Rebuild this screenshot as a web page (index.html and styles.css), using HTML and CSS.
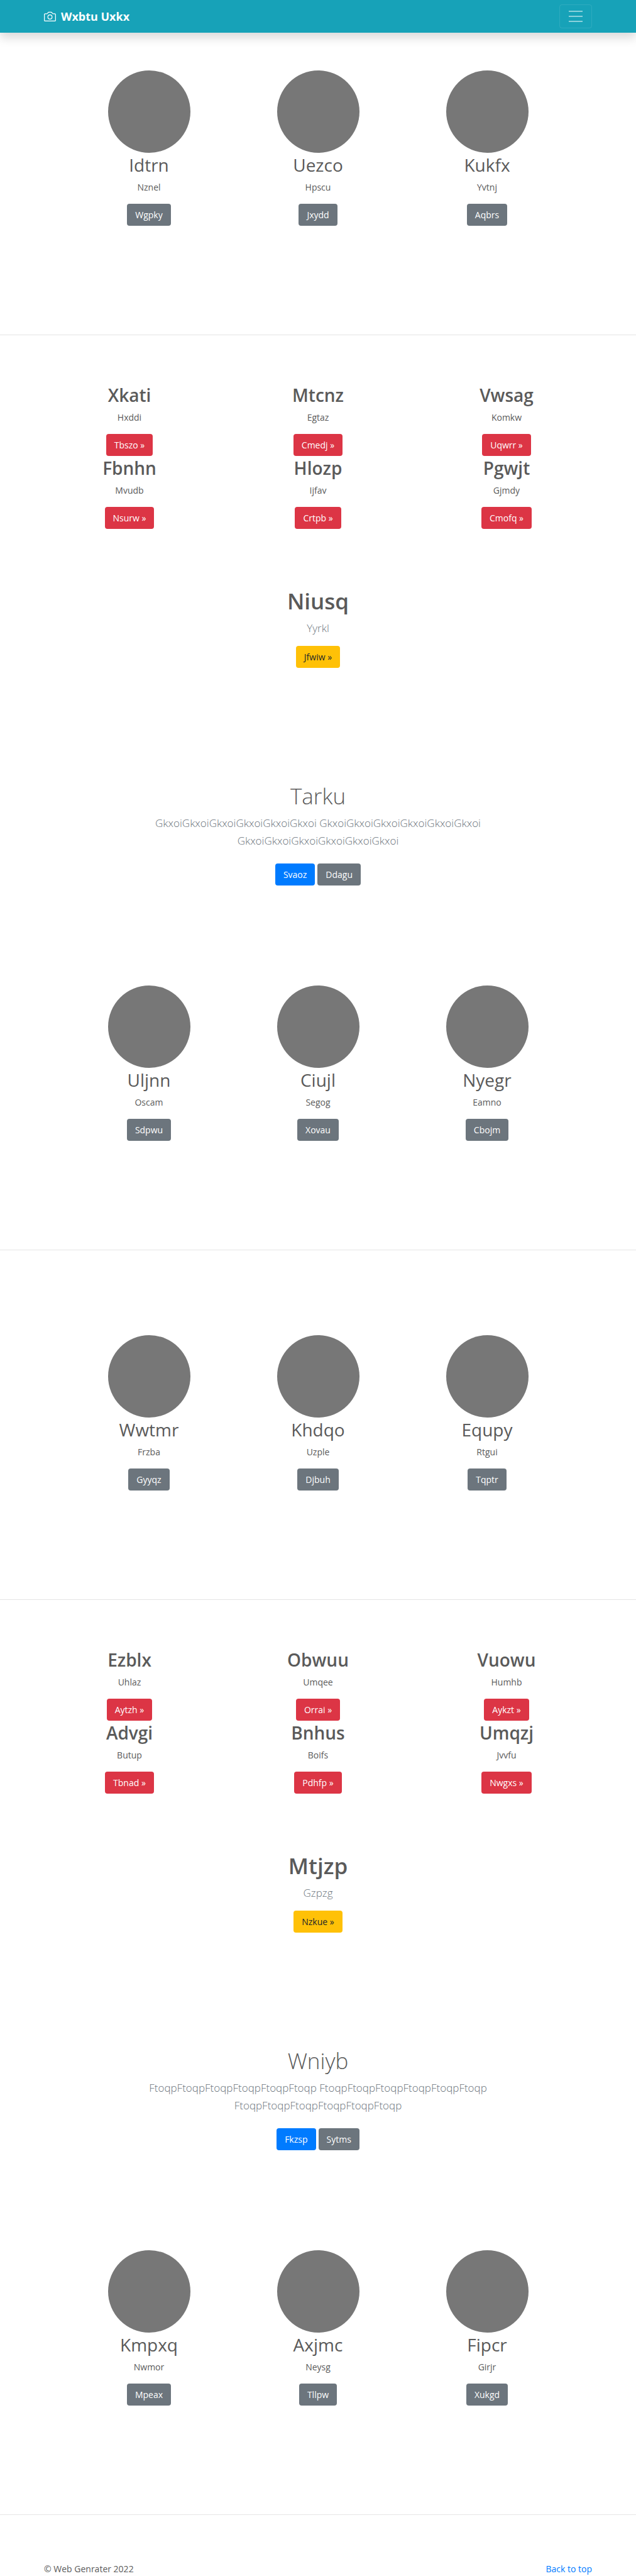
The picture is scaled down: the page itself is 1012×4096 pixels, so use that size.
FILE: index.html
```html
<!DOCTYPE html>
<html lang="en">
<head>
<meta charset="utf-8">
<meta name="viewport" content="width=device-width, initial-scale=1">
<title>Wxbtu Uxkx</title>
<link rel="stylesheet" href="styles.css">
</head>
<body>
<header class="navbar" id="top">
  <div class="container navbar-inner">
    <a class="brand" href="#top">
      <svg class="brand-icon" viewBox="0 0 20 20" fill="none" stroke="currentColor" stroke-width="1.3" aria-hidden="true">
        <path d="M2 5.200h2.400c.8 0 1.300-.4 1.700-1l.6-.9c.3-.5.8-.8 1.400-.8h3.800c.6 0 1.100.3 1.400.8l.6.9c.4.6.9 1 1.700 1H18a1.300 1.300 0 0 1 1.300 1.300v9.500a1.300 1.300 0 0 1-1.300 1.300H2A1.300 1.300 0 0 1 .7 16V6.500A1.300 1.300 0 0 1 2 5.200z"/>
        <circle cx="10" cy="10.500" r="3.500"/>
      </svg>
      <strong>Wxbtu Uxkx</strong>
    </a>
    <button class="toggler" type="button" aria-label="Toggle navigation">
      <svg class="toggler-icon" viewBox="0 0 28 28" stroke="currentColor" stroke-width="2" aria-hidden="true"><path d="M3 6h22M3 14h22M3 22h22"/></svg>
    </button>
  </div>
</header>
<main>
  <section class="features">
    <div class="card"><div class="avatar"></div><h2>Idtrn</h2><p>Nznel</p><a class="btn btn-secondary" href="#">Wgpky</a></div>
    <div class="card"><div class="avatar"></div><h2>Uezco</h2><p>Hpscu</p><a class="btn btn-secondary" href="#">Jxydd</a></div>
    <div class="card"><div class="avatar"></div><h2>Kukfx</h2><p>Yvtnj</p><a class="btn btn-secondary" href="#">Aqbrs</a></div>
  </section>
  <hr>
  <section class="topics">
    <div class="card"><h2>Xkati</h2><p>Hxddi</p><a class="btn btn-danger" href="#">Tbszo »</a></div>
    <div class="card"><h2>Mtcnz</h2><p>Egtaz</p><a class="btn btn-danger" href="#">Cmedj »</a></div>
    <div class="card"><h2>Vwsag</h2><p>Komkw</p><a class="btn btn-danger" href="#">Uqwrr »</a></div>
    <div class="card"><h2>Fbnhn</h2><p>Mvudb</p><a class="btn btn-danger" href="#">Nsurw »</a></div>
    <div class="card"><h2>Hlozp</h2><p>Ijfav</p><a class="btn btn-danger" href="#">Crtpb »</a></div>
    <div class="card"><h2>Pgwjt</h2><p>Gjmdy</p><a class="btn btn-danger" href="#">Cmofq »</a></div>
  </section>
  <section class="callout">
    <h1>Niusq</h1>
    <p class="lead">Yyrkl</p>
    <a class="btn btn-warning" href="#">Jfwiw »</a>
  </section>
  <section class="intro">
    <h1>Tarku</h1>
    <p class="lead">GkxoiGkxoiGkxoiGkxoiGkxoiGkxoi GkxoiGkxoiGkxoiGkxoiGkxoiGkxoi GkxoiGkxoiGkxoiGkxoiGkxoiGkxoi</p>
    <div class="actions"><a class="btn btn-primary" href="#">Svaoz</a><a class="btn btn-secondary" href="#">Ddagu</a></div>
  </section>
  <section class="features">
    <div class="card"><div class="avatar"></div><h2>Uljnn</h2><p>Oscam</p><a class="btn btn-secondary" href="#">Sdpwu</a></div>
    <div class="card"><div class="avatar"></div><h2>Ciujl</h2><p>Segog</p><a class="btn btn-secondary" href="#">Xovau</a></div>
    <div class="card"><div class="avatar"></div><h2>Nyegr</h2><p>Eamno</p><a class="btn btn-secondary" href="#">Cbojm</a></div>
  </section>
  <hr>
  <section class="features features-spaced">
    <div class="card"><div class="avatar"></div><h2>Wwtmr</h2><p>Frzba</p><a class="btn btn-secondary" href="#">Gyyqz</a></div>
    <div class="card"><div class="avatar"></div><h2>Khdqo</h2><p>Uzple</p><a class="btn btn-secondary" href="#">Djbuh</a></div>
    <div class="card"><div class="avatar"></div><h2>Equpy</h2><p>Rtgui</p><a class="btn btn-secondary" href="#">Tqptr</a></div>
  </section>
  <hr>
  <section class="topics">
    <div class="card"><h2>Ezblx</h2><p>Uhlaz</p><a class="btn btn-danger" href="#">Aytzh »</a></div>
    <div class="card"><h2>Obwuu</h2><p>Umqee</p><a class="btn btn-danger" href="#">Orrai »</a></div>
    <div class="card"><h2>Vuowu</h2><p>Humhb</p><a class="btn btn-danger" href="#">Aykzt »</a></div>
    <div class="card"><h2>Advgi</h2><p>Butup</p><a class="btn btn-danger" href="#">Tbnad »</a></div>
    <div class="card"><h2>Bnhus</h2><p>Boifs</p><a class="btn btn-danger" href="#">Pdhfp »</a></div>
    <div class="card"><h2>Umqzj</h2><p>Jvvfu</p><a class="btn btn-danger" href="#">Nwgxs »</a></div>
  </section>
  <section class="callout">
    <h1>Mtjzp</h1>
    <p class="lead">Gzpzg</p>
    <a class="btn btn-warning" href="#">Nzkue »</a>
  </section>
  <section class="intro">
    <h1>Wniyb</h1>
    <p class="lead">FtoqpFtoqpFtoqpFtoqpFtoqpFtoqp FtoqpFtoqpFtoqpFtoqpFtoqpFtoqp FtoqpFtoqpFtoqpFtoqpFtoqpFtoqp</p>
    <div class="actions"><a class="btn btn-primary" href="#">Fkzsp</a><a class="btn btn-secondary" href="#">Sytms</a></div>
  </section>
  <section class="features">
    <div class="card"><div class="avatar"></div><h2>Kmpxq</h2><p>Nwmor</p><a class="btn btn-secondary" href="#">Mpeax</a></div>
    <div class="card"><div class="avatar"></div><h2>Axjmc</h2><p>Neysg</p><a class="btn btn-secondary" href="#">Tllpw</a></div>
    <div class="card"><div class="avatar"></div><h2>Fipcr</h2><p>Girjr</p><a class="btn btn-secondary" href="#">Xukgd</a></div>
  </section>
  <hr>
</main>
<footer class="container footer">
  <p>© Web Genrater 2022</p>
  <a href="#top">Back to top</a>
</footer>
</body>
</html>
```
FILE: styles.css
```css
* { box-sizing: border-box; }
body {
  margin: 0;
  background: #fff;
  color: #5a5a5a;
  font-family: "Open Sans", "Noto Sans", sans-serif;
  font-size: 14px;
  line-height: 23px;
}
h1, h2, p { margin: 0; }
h1 { font-size: 35px; line-height: 48px; margin-bottom: 5px; }
h2 { font-size: 28px; line-height: 38px; margin-bottom: 5px; font-weight: 400; }
a { color: #007bff; text-decoration: none; }
hr { margin: 0; border: 0; border-top: 1px solid #e5e5e5; }

.container { max-width: 872px; margin: 0 auto; }

.navbar { background: #17a2b8; box-shadow: 0 8px 15px rgba(0, 0, 0, .15); }
.navbar-inner { display: flex; align-items: center; justify-content: space-between; height: 52px; }
.brand { display: flex; align-items: center; gap: 8px; color: #fff; font-size: 18px; }
.brand-icon { width: 19px; height: 19px; }
.toggler {
  display: flex;
  align-items: center;
  justify-content: center;
  width: 52px;
  height: 38px;
  padding: 0;
  background: none;
  border: 1px solid rgba(255, 255, 255, .1);
  border-radius: 4px;
  color: rgba(255, 255, 255, .5);
}
.toggler-icon { width: 28px; height: 28px; }

.card { display: flex; flex-direction: column; align-items: center; }
.card p { margin-bottom: 15px; }
.avatar { width: 131px; height: 131px; border-radius: 50%; background: #777; }

.features {
  display: grid;
  grid-template-columns: repeat(3, 1fr);
  max-width: 807px;
  margin: 0 auto;
  padding: 60px 0 173px;
}
.intro + .features { padding-top: 0; }
.features-spaced { padding-top: 135px; }

.topics {
  display: grid;
  grid-template-columns: repeat(3, 1fr);
  max-width: 900px;
  margin: 0 auto;
  padding: 76px 0 91px;
}
.topics h2 { font-weight: 600; }

.callout, .intro { display: flex; flex-direction: column; align-items: center; text-align: center; }
.callout { padding-bottom: 180px; }
.callout h1 { font-weight: 600; }
.intro { max-width: 600px; margin: 0 auto; padding-bottom: 159px; }
.intro h1 { font-weight: 300; }
.lead { margin-bottom: 14px; color: #6c757d; font-size: 17px; line-height: 28px; font-weight: 300; }
.intro .lead { margin-bottom: 22px; }
.actions { display: flex; gap: 4px; }

.btn {
  padding: 5px 12px;
  border: 1px solid transparent;
  border-radius: 4px;
  color: #fff;
}
.btn-secondary { background: #6c757d; }
.btn-danger { background: #dc3545; }
.btn-primary { background: #007bff; }
.btn-warning { background: #ffc107; color: #212529; }

.footer { display: flex; justify-content: space-between; padding-top: 74px; }
```
